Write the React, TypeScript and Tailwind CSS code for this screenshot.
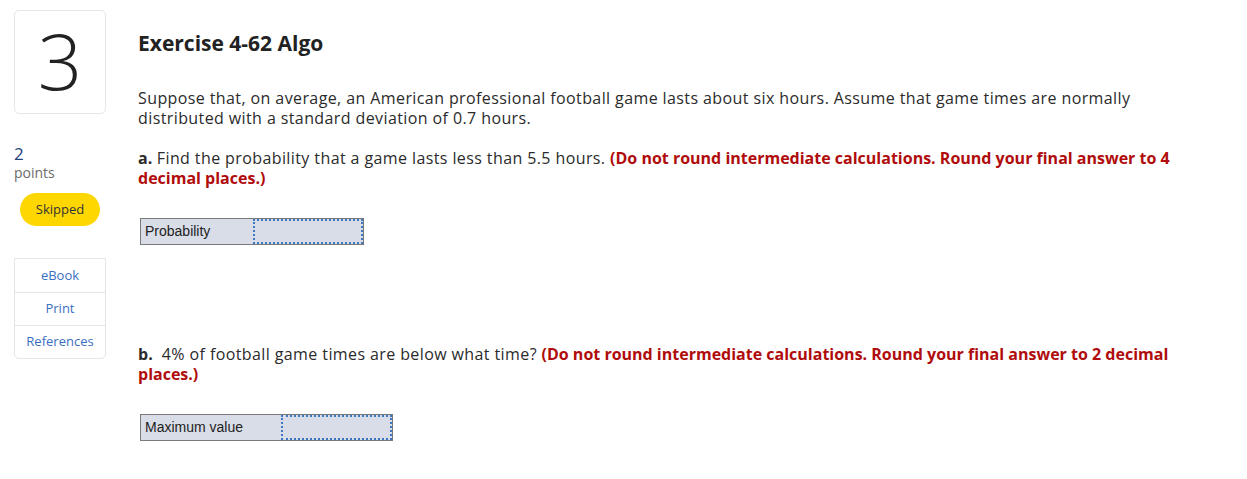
import React from 'react';

const links = ['eBook', 'Print', 'References'];

const AnswerRow: React.FC<{ label: string; labelWidth: string; inputWidth: string }> = ({ label, labelWidth, inputWidth }) => (
  <div className="flex h-[27px] border border-[#7a7a7a] bg-[#d9dde7] w-fit">
    <div className={`${labelWidth} flex items-center pl-[4px] text-[14px] tracking-normal text-[#222] font-['Liberation_Sans',sans-serif]`}>{label}</div>
    <div className={`${inputWidth} border-2 border-dotted border-[#3d78c6]`} />
  </div>
);

export default function App() {
  return (
    <div className="flex bg-white min-h-[479px] font-['Open_Sans',sans-serif] text-[#2b2b2b]">
      <aside className="w-[138px] shrink-0 pl-[14px] pt-[10px]">
        <div className="w-[92px] h-[104px] border border-[#e6e6e6] rounded-[5px] flex items-center justify-center">
          <span className="text-[78px] font-light leading-none text-[#222] -mt-[4px]">3</span>
        </div>
        <div className="mt-[31px] text-[17px] leading-[18px] text-[#23437a]">2</div>
        <div className="text-[14px] leading-[18px] text-[#6b6b6b] mt-[1px]">points</div>
        <div className="ml-[6px] mt-[11px] w-[80px] h-[33px] rounded-full bg-[#ffd700] flex items-center justify-center text-[13px] text-[#333]">
          Skipped
        </div>
        <div className="mt-[32px] w-[92px] border border-[#e6e6e6] rounded-b-[5px]">
          {links.map((l, i) => (
            <div
              key={l}
              className={`h-[33px] flex items-center justify-center text-[13px] text-[#3a70c0] ${i > 0 ? 'border-t border-[#e6e6e6]' : ''}`}
            >
              {l}
            </div>
          ))}
        </div>
      </aside>

      <main className="w-[1062px] pt-[30px] tracking-[0.4px]">
        <h1 className="text-[21px] font-bold text-[#222] leading-[26px] tracking-normal">Exercise 4-62 Algo</h1>
        <p className="mt-[32px] text-[16px] leading-[20px]">
          Suppose that, on average, an American professional football game lasts about six hours. Assume that game times are normally distributed with a standard deviation of 0.7 hours.
        </p>
        <p className="mt-[20px] text-[16px] leading-[20px]">
          <b className="tracking-normal">a.</b> Find the probability that a game lasts less than 5.5 hours.{' '}
          <b className="text-[#b00c0c] tracking-normal">(Do not round intermediate calculations. Round your final answer to 4</b>{' '}
          <b className="text-[#b00c0c] tracking-normal">decimal places.)</b>
        </p>
        <div className="mt-[30px] ml-[2px]">
          <AnswerRow label="Probability" labelWidth="w-[112px]" inputWidth="w-[110px]" />
        </div>
        <p className="mt-[99px] text-[16px] leading-[20px]">
          <b className="tracking-normal">b.</b>&nbsp; 4% of football game times are below what time?{' '}
          <b className="text-[#b00c0c] tracking-normal">(Do not round intermediate calculations. Round your final answer to 2 decimal</b>{' '}
          <b className="text-[#b00c0c] tracking-normal">places.)</b>
        </p>
        <div className="mt-[30px] ml-[2px]">
          <AnswerRow label="Maximum value" labelWidth="w-[140px]" inputWidth="w-[111px]" />
        </div>
      </main>
    </div>
  );
}
